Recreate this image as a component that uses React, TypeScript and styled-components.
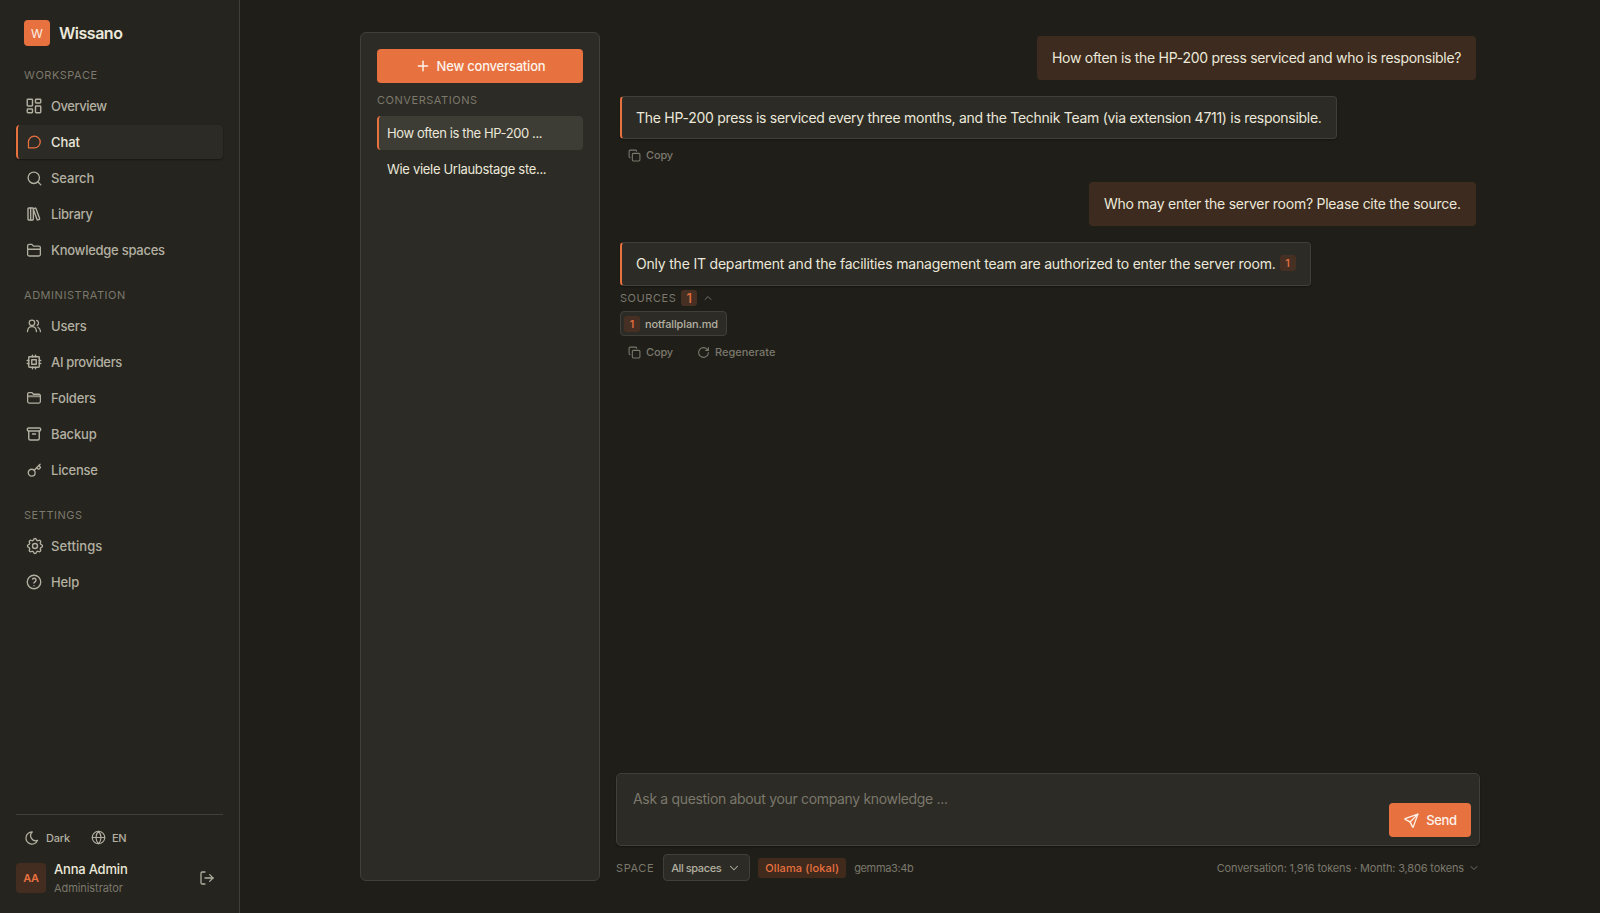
import React from 'react';
import styled, { createGlobalStyle } from 'styled-components';
import {
  ChevronDown, ChevronUp, Copy, Globe, Key, LayoutDashboard, LibraryBig, LogOut, Plus, RotateCw, Search,
} from 'lucide-react';
import { TbArchive, TbCpu, TbHelp, TbMoon, TbSend, TbSettings } from 'react-icons/tb';

const color = {
  page: '#1f1e19',
  sidebar: '#25241e',
  panel: '#2c2b25',
  raised: '#3d3c35',
  border: '#403f38',
  accent: '#e87140',
  accentSoft: '#3c2b1e',
  text: '#ebe8da',
  muted: '#b3b0a2',
  faint: '#7b786c',
};

const GlobalStyle = createGlobalStyle`
  * { box-sizing: border-box; }
  body { margin: 0; background: ${color.page}; color: ${color.text}; font-family: Inter, sans-serif; }
  button { font: inherit; border: 0; margin: 0; cursor: pointer; }
  svg { display: block; flex: none; }
`;

const Label = styled.span<{ $size?: number; $weight?: number; $track?: number; $color?: string }>`
  font-size: ${p => p.$size ?? 13}px;
  font-weight: ${p => p.$weight ?? 400};
  letter-spacing: ${p => p.$track ?? 0}px;
  color: ${p => p.$color ?? 'inherit'};
  white-space: nowrap;
`;

const Shell = styled.div`
  display: flex;
  height: 913px;
  overflow: hidden;
`;

const Sidebar = styled.aside`
  width: 240px;
  flex: none;
  display: flex;
  flex-direction: column;
  padding: 20px 16px;
  background: ${color.sidebar};
  border-right: 1px solid ${color.border};
`;

const Brand = styled.div`
  display: flex;
  align-items: center;
  gap: 9px;
  height: 26px;
  padding-left: 8px;
  margin-bottom: 21px;
`;

const BrandMark = styled.div`
  width: 26px;
  height: 26px;
  display: grid;
  place-items: center;
  border-radius: 4px;
  background: ${color.accent};
  color: #fbf0e4;
  font-size: 12px;
  line-height: 27px;
`;

const NavSection = styled.nav`
  display: flex;
  flex-direction: column;
  gap: 2px;
  margin-bottom: 20px;
`;

const NavHeading = styled.h2`
  margin: 0 0 4px;
  padding-left: 8px;
  font-size: 11px;
  line-height: 16px;
  font-weight: 400;
  letter-spacing: 0.54px;
  color: ${color.faint};
`;

const NavItem = styled.a<{ $active?: boolean }>`
  display: flex;
  align-items: center;
  gap: 8px;
  height: 34px;
  padding-left: 7px;
  border-left: 2px solid ${p => (p.$active ? color.accent : 'transparent')};
  border-radius: 4px;
  color: ${p => (p.$active ? color.text : color.muted)};
  background: ${p => (p.$active ? '#2c2b26' : 'transparent')};
  box-shadow: ${p => (p.$active ? '0 1px 2px rgba(0,0,0,.4)' : 'none')};
  svg { color: ${p => (p.$active ? color.accent : color.muted)}; }
`;

const IconSlot = styled.span`
  width: 18px;
  display: grid;
  place-items: center;
`;

const SidebarFooter = styled.footer`
  margin: auto 0 0;
  padding-top: 10px;
  border-top: 1px solid ${color.border};
`;

const Preferences = styled.div`
  display: flex;
  gap: 21px;
  height: 26px;
  padding: 0 0 1px 8px;
  color: ${color.muted};
`;

const Preference = styled.div`
  display: flex;
  align-items: center;
  gap: 6px;
`;

const Account = styled.div`
  display: flex;
  align-items: center;
  gap: 8px;
  margin-top: 12px;
  height: 30px;
  padding-right: 8px;
  color: ${color.muted};
`;

const Avatar = styled.div`
  width: 30px;
  height: 30px;
  display: grid;
  place-items: center;
  border-radius: 4px;
  background: #432d21;
  color: ${color.accent};
`;

const AccountName = styled.div`
  flex: 1;
  display: flex;
  flex-direction: column;
  padding-top: 2px;
  line-height: 19px;
`;

const Main = styled.main`
  flex: 1;
  display: flex;
  justify-content: center;
  padding: 32px 0;
`;

const Workspace = styled.div`
  width: 1120px;
  display: flex;
  gap: 16px;
`;

const Conversations = styled.section`
  width: 240px;
  flex: none;
  display: flex;
  flex-direction: column;
  padding: 16px;
  border: 1px solid ${color.border};
  border-radius: 6px;
  background: ${color.panel};
`;

const PrimaryButton = styled.button<{ $width: number }>`
  width: ${p => p.$width}px;
  height: 34px;
  display: flex;
  align-items: center;
  justify-content: center;
  gap: 6px;
  padding: 0;
  border-radius: 4px;
  background: ${color.accent};
  color: #fdf3ea;
`;

const ListHeading = styled(NavHeading)`
  margin: 9px 0 8px;
  padding: 0;
`;

const ConversationItem = styled.div<{ $active?: boolean }>`
  height: 34px;
  flex: none;
  display: flex;
  align-items: center;
  margin-bottom: 2px;
  padding-left: 8px;
  border-left: 2px solid ${p => (p.$active ? color.accent : 'transparent')};
  border-radius: 4px;
  background: ${p => (p.$active ? color.raised : 'transparent')};
`;

const Chat = styled.section`
  flex: 1;
  min-width: 0;
  display: flex;
  flex-direction: column;
`;

const Thread = styled.div`
  flex: 1;
  display: flex;
  flex-direction: column;
  align-items: flex-start;
  padding: 4px;
`;

const Question = styled.div<{ $width: number }>`
  align-self: flex-end;
  width: ${p => p.$width}px;
  height: 44px;
  display: flex;
  align-items: center;
  padding: 0 0 2px 15px;
  border-radius: 4px;
  background: ${color.accentSoft};
`;

const Answer = styled.div<{ $width: number; $height: number }>`
  width: ${p => p.$width}px;
  height: ${p => p.$height}px;
  display: flex;
  align-items: center;
  margin-top: 16px;
  padding: 0 0 ${p => (p.$height - 43) * 2}px 14px;
  border: 1px solid ${color.border};
  border-left: 2px solid ${color.accent};
  border-radius: 4px;
  background: ${color.panel};
  box-shadow: 0 1px 2px rgba(0, 0, 0, 0.35);
`;

const Citation = styled.span<{ $size?: number }>`
  width: 16px;
  height: 16px;
  display: grid;
  place-items: center;
  border-radius: 3px;
  background: #462f23;
  color: ${color.accent};
  font-size: ${p => p.$size ?? 11}px;
  font-weight: 500;
  line-height: 16px;
`;

const InlineCitation = styled(Citation)`
  margin: 0 0 1px 4px;
`;

const Actions = styled.div<{ $bottom?: number }>`
  display: flex;
  gap: 24px;
  height: 16px;
  margin: 8px 0 ${p => p.$bottom ?? 0}px 8px;
  color: ${color.faint};
`;

const Action = styled.div`
  display: flex;
  align-items: center;
  gap: 5px;
`;

const SourcesHeader = styled.div`
  display: flex;
  align-items: center;
  gap: 5px;
  height: 16px;
  margin-top: 4px;
  color: ${color.faint};
`;

const SourceChip = styled.div`
  display: flex;
  align-items: center;
  gap: 5px;
  width: 107px;
  height: 25px;
  margin-top: 5px;
  padding-left: 3px;
  border: 1px solid ${color.border};
  border-radius: 4px;
  background: ${color.panel};
  color: ${color.muted};
`;

const Composer = styled.div`
  height: 73px;
  display: flex;
  justify-content: space-between;
  padding: 15px 8px 8px 16px;
  border: 1px solid ${color.border};
  border-radius: 5px;
  background: ${color.panel};
  box-shadow: 0 1px 2px rgba(0, 0, 0, 0.35);
  line-height: 19px;
`;

const SendSlot = styled.div`
  align-self: flex-end;
`;

const StatusBar = styled.div`
  display: flex;
  align-items: center;
  height: 27px;
  margin-top: 8px;
  color: ${color.faint};
`;

const SpaceSelect = styled.div`
  width: 87px;
  height: 27px;
  display: flex;
  align-items: center;
  justify-content: space-between;
  margin-left: 9px;
  padding: 0 8px 0 7px;
  border: 1px solid ${color.border};
  border-radius: 4px;
  background: ${color.panel};
  color: ${color.muted};
`;

const ProviderTag = styled.span`
  width: 88px;
  height: 20px;
  display: grid;
  place-items: center;
  margin: 0 8px;
  border-radius: 3px;
  background: #402a1c;
  color: ${color.accent};
`;

const Usage = styled.div`
  margin-left: auto;
  display: flex;
  align-items: center;
  gap: 4px;
`;

const Stroke = styled.svg.attrs({
  width: 18, height: 18, viewBox: '0 0 24 24', fill: 'none', stroke: 'currentColor',
  strokeWidth: 1.7, strokeLinecap: 'round', strokeLinejoin: 'round',
})``;

const ChatIcon = () => (
  <Stroke><path d="M12.500 4.200a7.800 7.800 0 1 1 0 15.600H4.600V12A7.800 7.800 0 0 1 12.500 4.200Z" /></Stroke>
);
const FolderIcon = () => (
  <Stroke>
    <path d="M3.500 18V6.500a2 2 0 0 1 2-2h3.700l2 2.300h7.300a2 2 0 0 1 2 2V18a2 2 0 0 1-2 2h-13a2 2 0 0 1-2-2Z" />
    <path d="M3.500 11h17" />
  </Stroke>
);
const FolderBandIcon = () => (
  <Stroke>
    <path d="M3.500 16.800V6.700a1.900 1.900 0 0 1 1.900-1.900h4l1.900 2.200h7.300a1.900 1.900 0 0 1 1.900 1.900v7.900a2 2 0 0 1-2 2h-13a2 2 0 0 1-2-2Z" />
    <path d="M4 9.700h16" strokeWidth={2.600} opacity={0.75} />
  </Stroke>
);
const UsersIcon = () => (
  <Stroke>
    <circle cx="9.300" cy="7.800" r="3.700" />
    <path d="M3.300 19.500c.2-4.100 2.600-6.600 6-6.600s5.800 2.500 6 6.600" />
    <path d="M15.500 4.500a3.700 3.700 0 0 1 .7 6.700" />
    <path d="M17.300 13.600c2 1 3.200 3 3.400 5.900" />
  </Stroke>
);

type Item = { name: string; track: number; icon: React.ReactNode; active?: boolean };

const sections: { title: string; items: Item[] }[] = [
  {
    title: 'WORKSPACE',
    items: [
      { name: 'Overview', track: -0.44, icon: <LayoutDashboard size={18} strokeWidth={1.9} /> },
      { name: 'Chat', track: -0.1, icon: <ChatIcon />, active: true },
      { name: 'Search', track: -0.05, icon: <Search size={17} strokeWidth={1.9} /> },
      { name: 'Library', track: -0.3, icon: <LibraryBig size={16} strokeWidth={2.1} /> },
      { name: 'Knowledge spaces', track: -0.26, icon: <FolderIcon /> },
    ],
  },
  {
    title: 'ADMINISTRATION',
    items: [
      { name: 'Users', track: -0.15, icon: <UsersIcon /> },
      { name: 'AI providers', track: -0.34, icon: <TbCpu size={18} strokeWidth={1.9} /> },
      { name: 'Folders', track: -0.17, icon: <FolderBandIcon /> },
      { name: 'Backup', track: -0.16, icon: <TbArchive size={18} strokeWidth={1.9} /> },
      { name: 'License', track: -0.21, icon: <Key size={15} strokeWidth={2.1} /> },
    ],
  },
  {
    title: 'SETTINGS',
    items: [
      { name: 'Settings', track: 0.1, icon: <TbSettings size={20} strokeWidth={1.7} /> },
      { name: 'Help', track: -0.15, icon: <TbHelp size={18} strokeWidth={1.8} /> },
    ],
  },
];

const CopyAction = () => (
  <Action><Copy size={13} strokeWidth={2} /><Label $size={11} $weight={500} $track={-0.15}>Copy</Label></Action>
);

export default function App() {
  return (
    <Shell>
      <GlobalStyle />
      <Sidebar>
        <Brand>
          <BrandMark>W</BrandMark>
          <Label $size={16} $weight={600} $track={-0.48}>Wissano</Label>
        </Brand>
        {sections.map(section => (
          <NavSection key={section.title}>
            <NavHeading>{section.title}</NavHeading>
            {section.items.map(item => (
              <NavItem key={item.name} $active={item.active}>
                <IconSlot>{item.icon}</IconSlot>
                <Label $weight={500} $track={item.track}>{item.name}</Label>
              </NavItem>
            ))}
          </NavSection>
        ))}
        <SidebarFooter>
          <Preferences>
            <Preference><TbMoon size={16} strokeWidth={1.9} /><Label $size={11} $weight={500} $track={-0.2}>Dark</Label></Preference>
            <Preference><Globe size={15} strokeWidth={1.8} /><Label $size={11} $weight={500} $track={-0.4}>EN</Label></Preference>
          </Preferences>
          <Account>
            <Avatar><Label $size={11} $weight={600} $track={-0.3}>AA</Label></Avatar>
            <AccountName>
              <Label $weight={500} $track={-0.2} $color={color.text}>Anna Admin</Label>
              <Label $size={11} $track={-0.07} $color={color.faint}>Administrator</Label>
            </AccountName>
            <LogOut size={16} strokeWidth={1.9} />
          </Account>
        </SidebarFooter>
      </Sidebar>

      <Main>
        <Workspace>
          <Conversations>
            <PrimaryButton $width={206}>
              <Plus size={16} strokeWidth={2.2} />
              <Label $weight={500} $track={-0.2}>New conversation</Label>
            </PrimaryButton>
            <ListHeading>CONVERSATIONS</ListHeading>
            <ConversationItem $active><Label $track={-0.39}>How often is the HP-200 ...</Label></ConversationItem>
            <ConversationItem><Label $track={-0.31}>Wie viele Urlaubstage ste...</Label></ConversationItem>
          </Conversations>

          <Chat>
            <Thread>
              <Question $width={439}>
                <Label $size={14} $track={-0.29}>How often is the HP-200 press serviced and who is responsible?</Label>
              </Question>
              <Answer $width={717} $height={43}>
                <Label $size={14} $track={-0.28}>
                  The HP-200 press is serviced every three months, and the Technik Team (via extension 4711) is responsible.
                </Label>
              </Answer>
              <Actions $bottom={19}><CopyAction /></Actions>
              <Question $width={387}>
                <Label $size={14} $track={-0.26}>Who may enter the server room? Please cite the source.</Label>
              </Question>
              <Answer $width={691} $height={44}>
                <Label $size={14} $track={-0.2}>
                  Only the IT department and the facilities management team are authorized to enter the server room.
                </Label>
                <InlineCitation>1</InlineCitation>
              </Answer>
              <SourcesHeader>
                <Label $size={11} $track={0.55}>SOURCES</Label>
                <Citation $size={13}>1</Citation>
                <ChevronUp size={12} strokeWidth={1.8} />
              </SourcesHeader>
              <SourceChip>
                <Citation>1</Citation>
                <Label $size={11} $weight={500} $track={-0.13}>notfallplan.md</Label>
              </SourceChip>
              <Actions>
                <CopyAction />
                <Action><RotateCw size={13} strokeWidth={2} /><Label $size={11} $weight={500}>Regenerate</Label></Action>
              </Actions>
            </Thread>

            <Composer>
              <Label $size={14} $track={-0.33} $color={color.faint}>Ask a question about your company knowledge ...</Label>
              <SendSlot>
                <PrimaryButton $width={82}>
                  <TbSend size={17} strokeWidth={1.9} />
                  <Label $weight={500} $track={-0.3}>Send</Label>
                </PrimaryButton>
              </SendSlot>
            </Composer>

            <StatusBar>
              <Label $size={11} $track={0.6}>SPACE</Label>
              <SpaceSelect>
                <Label $size={11} $weight={500} $track={-0.4}>All spaces</Label>
                <ChevronDown size={14} strokeWidth={1.8} />
              </SpaceSelect>
              <ProviderTag><Label $size={11} $weight={500} $track={0.14}>Ollama (lokal)</Label></ProviderTag>
              <Label $size={11} $track={-0.35}>gemma3:4b</Label>
              <Usage>
                <Label $size={11} $track={-0.16}>Conversation: 1,916 tokens · Month: 3,806 tokens</Label>
                <ChevronDown size={12} strokeWidth={1.8} />
              </Usage>
            </StatusBar>
          </Chat>
        </Workspace>
      </Main>
    </Shell>
  );
}
